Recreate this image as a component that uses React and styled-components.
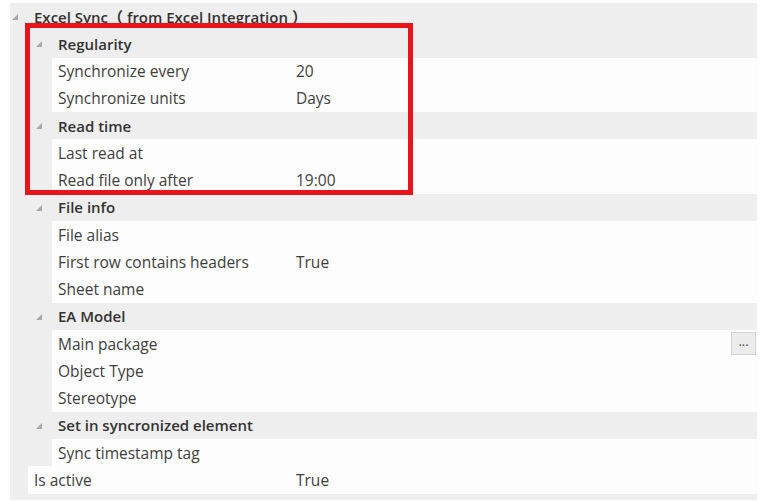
import styled, {createGlobalStyle} from 'styled-components'

const GlobalStyle = createGlobalStyle`
  body {
    margin: 0;
    background: #ffffff;
    font-family: 'Open Sans', 'Noto Sans CJK SC', sans-serif;
  }
`

const rows = [
  {type: 'group', level: 0, label: 'Excel Sync（ from Excel Integration ）'},
  {type: 'group', level: 1, label: 'Regularity'},
  {type: 'item', level: 1, label: 'Synchronize every', value: '20'},
  {type: 'item', level: 1, label: 'Synchronize units', value: 'Days'},
  {type: 'group', level: 1, label: 'Read time'},
  {type: 'item', level: 1, label: 'Last read at', value: ''},
  {type: 'item', level: 1, label: 'Read file only after', value: '19:00'},
  {type: 'group', level: 1, label: 'File info'},
  {type: 'item', level: 1, label: 'File alias', value: ''},
  {type: 'item', level: 1, label: 'First row contains headers', value: 'True'},
  {type: 'item', level: 1, label: 'Sheet name', value: ''},
  {type: 'group', level: 1, label: 'EA Model'},
  {type: 'item', level: 1, label: 'Main package', value: '', button: true},
  {type: 'item', level: 1, label: 'Object Type', value: ''},
  {type: 'item', level: 1, label: 'Stereotype', value: ''},
  {type: 'group', level: 1, label: 'Set in syncronized element'},
  {type: 'item', level: 1, label: 'Sync timestamp tag', value: ''},
  {type: 'item', level: 0, label: 'Is active', value: 'True'},
]

const gutterWidth = level => 18 + 24 * level

const Expander = () => (
  <svg width="6" height="6" viewBox="0 0 6 6">
    <polygon points="6,0 6,6 0,6" fill="#a8a8a8" />
  </svg>
)

export default function App() {
  return (
    <Page>
      <GlobalStyle />
      <Panel>
        {rows.map((row, i) => (
          <Row key={i}>
            <Gutter $w={gutterWidth(row.level)}>
              {row.type === 'group' && <Expander />}
            </Gutter>
            {row.type === 'group' ? (
              <GroupLabel>{row.label}</GroupLabel>
            ) : (
              <Body $labelW={286 - gutterWidth(row.level) - 6}>
                <Label>{row.label}</Label>
                <Value>{row.value}</Value>
                {row.button && <DotsButton>...</DotsButton>}
              </Body>
            )}
          </Row>
        ))}
      </Panel>
      <Highlight />
    </Page>
  )
}

const Page = styled.div`
  position: relative;
  width: 760px;
  height: 501px;
  padding: 3px 3px 0 10px;
  box-sizing: border-box;
`

const Panel = styled.div`
  background: #eeeeee;
  padding-bottom: 6px;
  display: flex;
  flex-direction: column;
`

const Row = styled.div`
  display: flex;
  height: 27.25px;
`

const Gutter = styled.div`
  width: ${p => p.$w}px;
  flex: none;
  display: flex;
  align-items: center;
  justify-content: flex-end;
  padding-right: 10px;
  box-sizing: border-box;
  padding-top: 1px;
`

const GroupLabel = styled.div`
  flex: 1;
  display: flex;
  align-items: center;
  padding-left: 6px;
  font-size: 15px;
  font-weight: 600;
  color: #333333;
  white-space: pre;
`

const Body = styled.div`
  flex: 1;
  display: grid;
  grid-template-columns: ${p => p.$labelW}px 1fr auto;
  align-items: center;
  padding-left: 6px;
  padding-right: 1px;
  background: #fdfdfd;
  font-size: 15.5px;
  color: #3d3d3d;
`

const Label = styled.span``

const Value = styled.span``

const DotsButton = styled.div`
  width: 25px;
  height: 23px;
  box-sizing: border-box;
  border: 1px solid #d2d2d2;
  background: #ececec;
  color: #444;
  font-size: 13px;
  line-height: 17px;
  text-align: center;
`

const Highlight = styled.div`
  position: absolute;
  left: 25px;
  top: 23px;
  width: 388px;
  height: 172px;
  box-sizing: border-box;
  border: 5px solid #e8141c;
  pointer-events: none;
`
